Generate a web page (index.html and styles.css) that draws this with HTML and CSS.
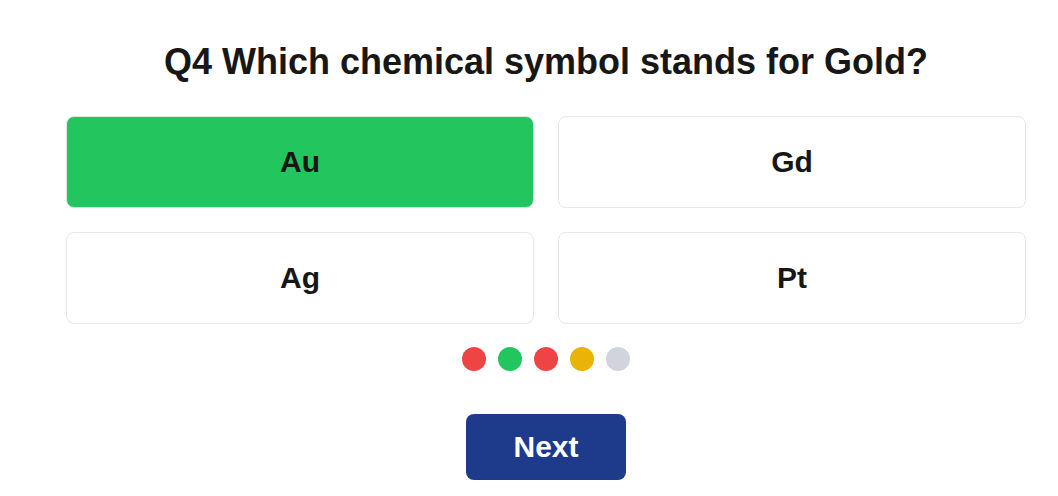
FILE: index.html
```html
<!DOCTYPE html>
<html>
<head>
<meta charset="utf-8">
<link rel="stylesheet" href="styles.css">
</head>
<body>
<div class="quiz">
  <h1 class="question">Q4 Which chemical symbol stands for Gold?</h1>
  <div class="answers">
    <button class="answer correct">Au</button>
    <button class="answer">Gd</button>
    <button class="answer">Ag</button>
    <button class="answer">Pt</button>
  </div>
  <div class="progress">
    <span class="dot red"></span>
    <span class="dot green"></span>
    <span class="dot red"></span>
    <span class="dot yellow"></span>
    <span class="dot gray"></span>
  </div>
  <div class="actions">
    <button class="next">Next</button>
  </div>
</div>
</body>
</html>
```
FILE: styles.css
```css
html, body {
  margin: 0;
  padding: 0;
  background: #ffffff;
  font-family: "Liberation Sans", Arial, sans-serif;
  color: #171717;
}
.quiz {
  width: 960px;
  margin-left: 66px;
  padding-top: 42px;
  display: flex;
  flex-direction: column;
  align-items: center;
}
.question {
  margin: 0;
  font-size: 36px;
  font-weight: 700;
  line-height: 40px;
}
.answers {
  margin-top: 34px;
  width: 100%;
  display: grid;
  grid-template-columns: 1fr 1fr;
  gap: 24px;
}
.answer {
  height: 92px;
  border: 1px solid #e5e7eb;
  border-radius: 8px;
  background: #ffffff;
  font-family: "Liberation Sans", Arial, sans-serif;
  font-size: 30px;
  font-weight: 700;
  color: #171717;
  padding: 0;
}
.answer.correct {
  background: #22c55e;
  border-color: #dfe5e1;
}
.progress {
  margin-top: 23px;
  display: flex;
  gap: 12px;
}
.dot {
  width: 24px;
  height: 24px;
  border-radius: 50%;
  display: block;
}
.dot.red { background: #ef4444; }
.dot.green { background: #22c55e; }
.dot.yellow { background: #eab308; }
.dot.gray { background: #d1d5db; }
.actions {
  margin-top: 43px;
}
.next {
  width: 160px;
  height: 66px;
  border: none;
  border-radius: 8px;
  background: #1e3a8a;
  color: #ffffff;
  font-family: "Liberation Sans", Arial, sans-serif;
  font-size: 30px;
  font-weight: 700;
  padding: 0;
}
```
